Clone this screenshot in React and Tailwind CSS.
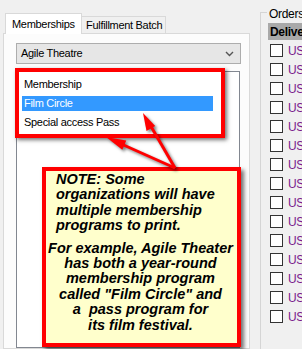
import React from "react";

function App() {
  const rows = Array.from({ length: 15 }, (_, i) => i);

  return (
    <div className="relative flex w-[302px] h-[349px] overflow-hidden bg-[#f0f0f0] text-[11px] tracking-[-0.3px] text-black font-['Liberation_Sans',Arial,sans-serif]">
      {/* Tab control */}
      <div className="ml-[3px] w-[247px] flex flex-col pt-[13px] shrink-0">
        <div className="flex items-end h-[20px]">
          <div className="relative z-10 ml-[2px] -mb-px w-[77px] h-[21px] bg-white border border-b-0 border-[#d9d9d9] flex items-center pl-[6px]">
            Memberships
          </div>
          <div className="w-[84px] h-[17px] bg-[#f0f0f0] border border-l-0 border-b-0 border-[#d9d9d9] flex items-center pl-[4px]">
            Fulfillment Batch
          </div>
        </div>
        <div className="flex-1 flex flex-col bg-[#fcfcfc] border border-[#d9d9d9] pl-[12px] pr-[8px] pt-[9px]">
          <div className="h-[21px] flex items-center justify-between bg-[#e6e6e6] border border-[#adadad] pl-[4px] pr-[6px]">
            <span>Agile Theatre</span>
            <svg width="9" height="6" viewBox="0 0 9 6">
              <path d="M1 1 L4.5 4.5 L8 1" fill="none" stroke="#555" strokeWidth="1.4" />
            </svg>
          </div>
          <div className="mt-[7px] mr-px flex-1 bg-white border border-[#828790]" />
        </div>
      </div>

      {/* Orders group */}
      <div className="relative ml-[10px] mt-[12px] flex-1 flex flex-col border-l border-t border-[#d5d5d5]">
        <span className="absolute -top-[8px] left-[6px] bg-[#f0f0f0] px-[2px] text-[12px]">Orders</span>
        <div className="mt-[10px] ml-[7px] h-[17px] bg-[#a9a9a9] flex items-center pl-[2px] font-bold text-[12px] whitespace-nowrap">
          Delivery
        </div>
        <div className="mt-[1px] flex flex-col">
          {rows.map((i) => (
            <div key={i} className="h-[19px] flex items-center pl-[9px] gap-[5px]">
              <span className="w-[13px] h-[13px] border border-[#333] bg-white shrink-0" />
              <span className="text-[#7a1a8c] text-[12px] whitespace-nowrap">USPS</span>
            </div>
          ))}
        </div>
      </div>

      {/* Red highlight around the membership list */}
      <div className="absolute left-[15px] top-[68px] w-[210px] h-[70px] border-4 border-[#ff0000] bg-white shadow-[2px_2px_4px_rgba(0,0,0,0.55)] flex flex-col gap-[4px] pt-[5px] pl-[3px] pr-[8px]">
        <div className="h-[15px] flex items-center pl-[2px]">Membership</div>
        <div className="h-[15px] flex items-center pl-[2px] bg-[#3399ff] text-white">Film Circle</div>
        <div className="h-[15px] flex items-center pl-[2px]">Special access Pass</div>
      </div>

      {/* Note */}
      <div className="absolute left-[42px] top-[167px] w-[199px] h-[180px] border-4 border-[#ff0000] bg-[#ffffcc] shadow-[3px_3px_4px_rgba(0,0,0,0.55)] pt-[1px] pl-[10px] pr-[4px] tracking-normal text-[14.5px] leading-[15.4px] font-bold italic font-['Liberation_Sans',Arial,sans-serif]">
        <p>
          NOTE: Some
          <br />
          organizations will have
          <br />
          multiple membership
          <br />
          programs to print.
        </p>
        <p className="mt-[7px] -ml-[8px] text-center">
          For example, Agile Theater
          <br />
          has both a year-round
          <br />
          membership program
          <br />
          called "Film Circle" and
          <br />
          a&nbsp; pass program for
          <br />
          its film festival.
        </p>
      </div>

      {/* Arrows */}
      <svg className="absolute inset-0 pointer-events-none drop-shadow-[2px_2px_1.5px_rgba(0,0,0,0.5)]" width="302" height="349" viewBox="0 0 302 349">
        <line x1="175" y1="168" x2="149" y2="123" stroke="#ff0000" strokeWidth="3" />
        <polygon points="143,113 146.5,131 155.2,126" fill="#ff0000" />
        <line x1="175" y1="168" x2="118" y2="142.5" stroke="#ff0000" strokeWidth="3" />
        <polygon points="106,137 122.3,149.8 126.3,140.6" fill="#ff0000" />
      </svg>
    </div>
  );
}

export default App;
